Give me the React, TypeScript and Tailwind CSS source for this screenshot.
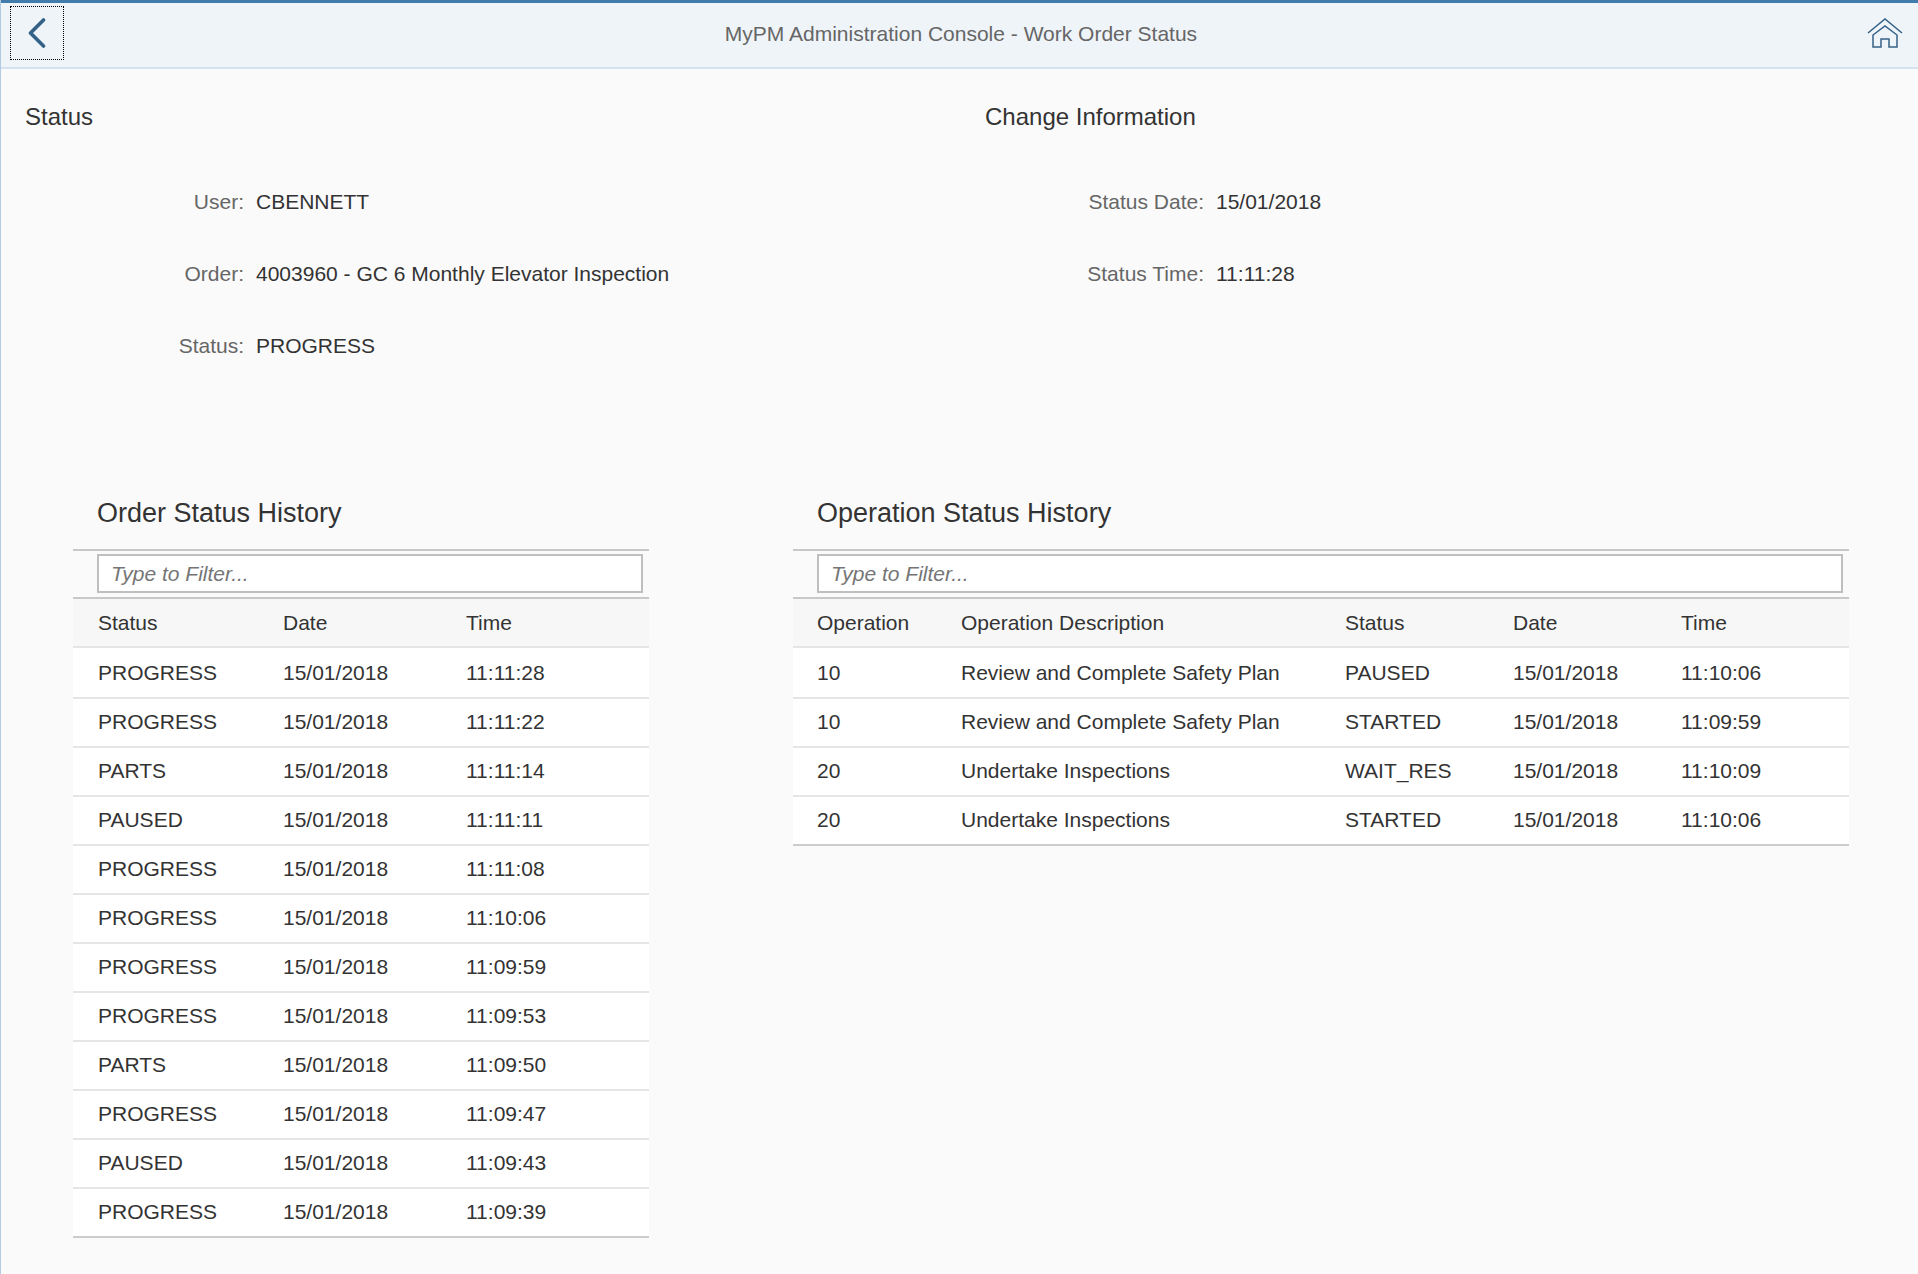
import React from "react";

const orderRows = [
  ["PROGRESS", "15/01/2018", "11:11:28"],
  ["PROGRESS", "15/01/2018", "11:11:22"],
  ["PARTS", "15/01/2018", "11:11:14"],
  ["PAUSED", "15/01/2018", "11:11:11"],
  ["PROGRESS", "15/01/2018", "11:11:08"],
  ["PROGRESS", "15/01/2018", "11:10:06"],
  ["PROGRESS", "15/01/2018", "11:09:59"],
  ["PROGRESS", "15/01/2018", "11:09:53"],
  ["PARTS", "15/01/2018", "11:09:50"],
  ["PROGRESS", "15/01/2018", "11:09:47"],
  ["PAUSED", "15/01/2018", "11:09:43"],
  ["PROGRESS", "15/01/2018", "11:09:39"],
];

const opRows = [
  ["10", "Review and Complete Safety Plan", "PAUSED", "15/01/2018", "11:10:06"],
  ["10", "Review and Complete Safety Plan", "STARTED", "15/01/2018", "11:09:59"],
  ["20", "Undertake Inspections", "WAIT_RES", "15/01/2018", "11:10:09"],
  ["20", "Undertake Inspections", "STARTED", "15/01/2018", "11:10:06"],
];

function Field({ label, value }: { label: string; value: string }) {
  return (
    <div className="flex h-[72px] items-center">
      <div className="w-[219px] shrink-0 text-right text-[#666666]">{label}</div>
      <div className="ml-[12px] text-[#333333]">{value}</div>
    </div>
  );
}

function HistoryTable({
  title,
  widthClass,
  padClass,
  headers,
  cols,
  rows,
}: {
  title: string;
  widthClass: string;
  padClass: string;
  headers: string[];
  cols: string;
  rows: string[][];
}) {
  return (
    <div className={widthClass}>
      <div className="flex h-[50px] items-center pl-[24px] pt-[2px] text-[27px] text-[#333333]">{title}</div>
      <div className="mt-[12px] h-[50px] border-y-2 border-[#c8c8c8] pl-[24px] pr-[6px] pt-[3px]">
        <div className="flex h-[39px] items-center border-2 border-[#bfbfbf] bg-white pl-[12px] italic text-[#757575]">
          Type to Filter...
        </div>
      </div>
      <div className={`grid h-[49px] items-center border-b-2 border-[#e5e5e5] bg-[#f7f7f7] ${padClass} ${cols}`}>
        {headers.map((h) => (
          <div key={h} className="text-[#333333]">{h}</div>
        ))}
      </div>
      {rows.map((r, i) => (
        <div
          key={i}
          className={`grid items-center border-b-2 bg-white text-[#333333] ${padClass} ${cols} ${
            i === 0 ? "h-[51px]" : "h-[49px] pb-[2px]"
          } ${i === rows.length - 1 ? "border-[#cccccc]" : "border-[#e5e5e5]"}`}
        >
          {r.map((c, j) => (
            <div key={j}>{c}</div>
          ))}
        </div>
      ))}
    </div>
  );
}

export default function App() {
  return (
    <div
      className="min-h-[1274px] border-l border-[#b3cbe2] bg-[#fafafa] text-[21px]"
      style={{ fontFamily: '"Liberation Sans", Arial, sans-serif' }}
    >
      <header className="relative flex h-[69px] items-center justify-center border-b-2 border-t-[3px] border-b-[#d5e2f0] border-t-[#427cac] bg-[#eff4f9] pb-[2px] pl-[3px] text-[#666666]">
        <button className="absolute left-[9px] top-[3px] flex h-[54px] w-[54px] items-center justify-center border border-dotted border-black">
          <svg width="18" height="30" viewBox="0 0 18 30" fill="none" stroke="#346187" strokeWidth="3.6" strokeLinecap="round" strokeLinejoin="round">
            <path d="M15.5 2 L2.5 15 L15.5 28" />
          </svg>
        </button>
        <span>MyPM Administration Console - Work Order Status</span>
        <svg className="absolute right-[15px] top-[15px]" width="36" height="32" viewBox="0 0 36 32" fill="none" stroke="#346187" strokeWidth="1.5" strokeLinejoin="miter">
          <path d="M1 15 L18 1 L35 15" />
          <path d="M6 29 V17 L18 8 L30 17 V29 H22 V21 H14 V29 Z" />
        </svg>
      </header>

      <div className="flex">
        <section className="w-[961px] pl-[24px]">
          <div className="pt-[33px] text-[24px] leading-[30px] text-[#333333]">Status</div>
          <div className="mt-[34px]">
            <Field label="User:" value="CBENNETT" />
            <Field label="Order:" value="4003960 - GC 6 Monthly Elevator Inspection" />
            <Field label="Status:" value="PROGRESS" />
          </div>
        </section>
        <section className="pl-[23px]">
          <div className="pt-[33px] text-[24px] leading-[30px] text-[#333333]">Change Information</div>
          <div className="mt-[34px]">
            <Field label="Status Date:" value="15/01/2018" />
            <Field label="Status Time:" value="11:11:28" />
          </div>
        </section>
      </div>

      <div className="mt-[105px] flex pl-[72px]">
        <HistoryTable
          title="Order Status History"
          widthClass="w-[576px]"
          padClass="pl-[25px]"
          headers={["Status", "Date", "Time"]}
          cols="grid-cols-[185px_183px_1fr]"
          rows={orderRows}
        />
        <div className="w-[144px]" />
        <HistoryTable
          title="Operation Status History"
          widthClass="w-[1056px]"
          padClass="pl-[24px]"
          headers={["Operation", "Operation Description", "Status", "Date", "Time"]}
          cols="grid-cols-[144px_384px_168px_168px_1fr]"
          rows={opRows}
        />
      </div>
    </div>
  );
}
